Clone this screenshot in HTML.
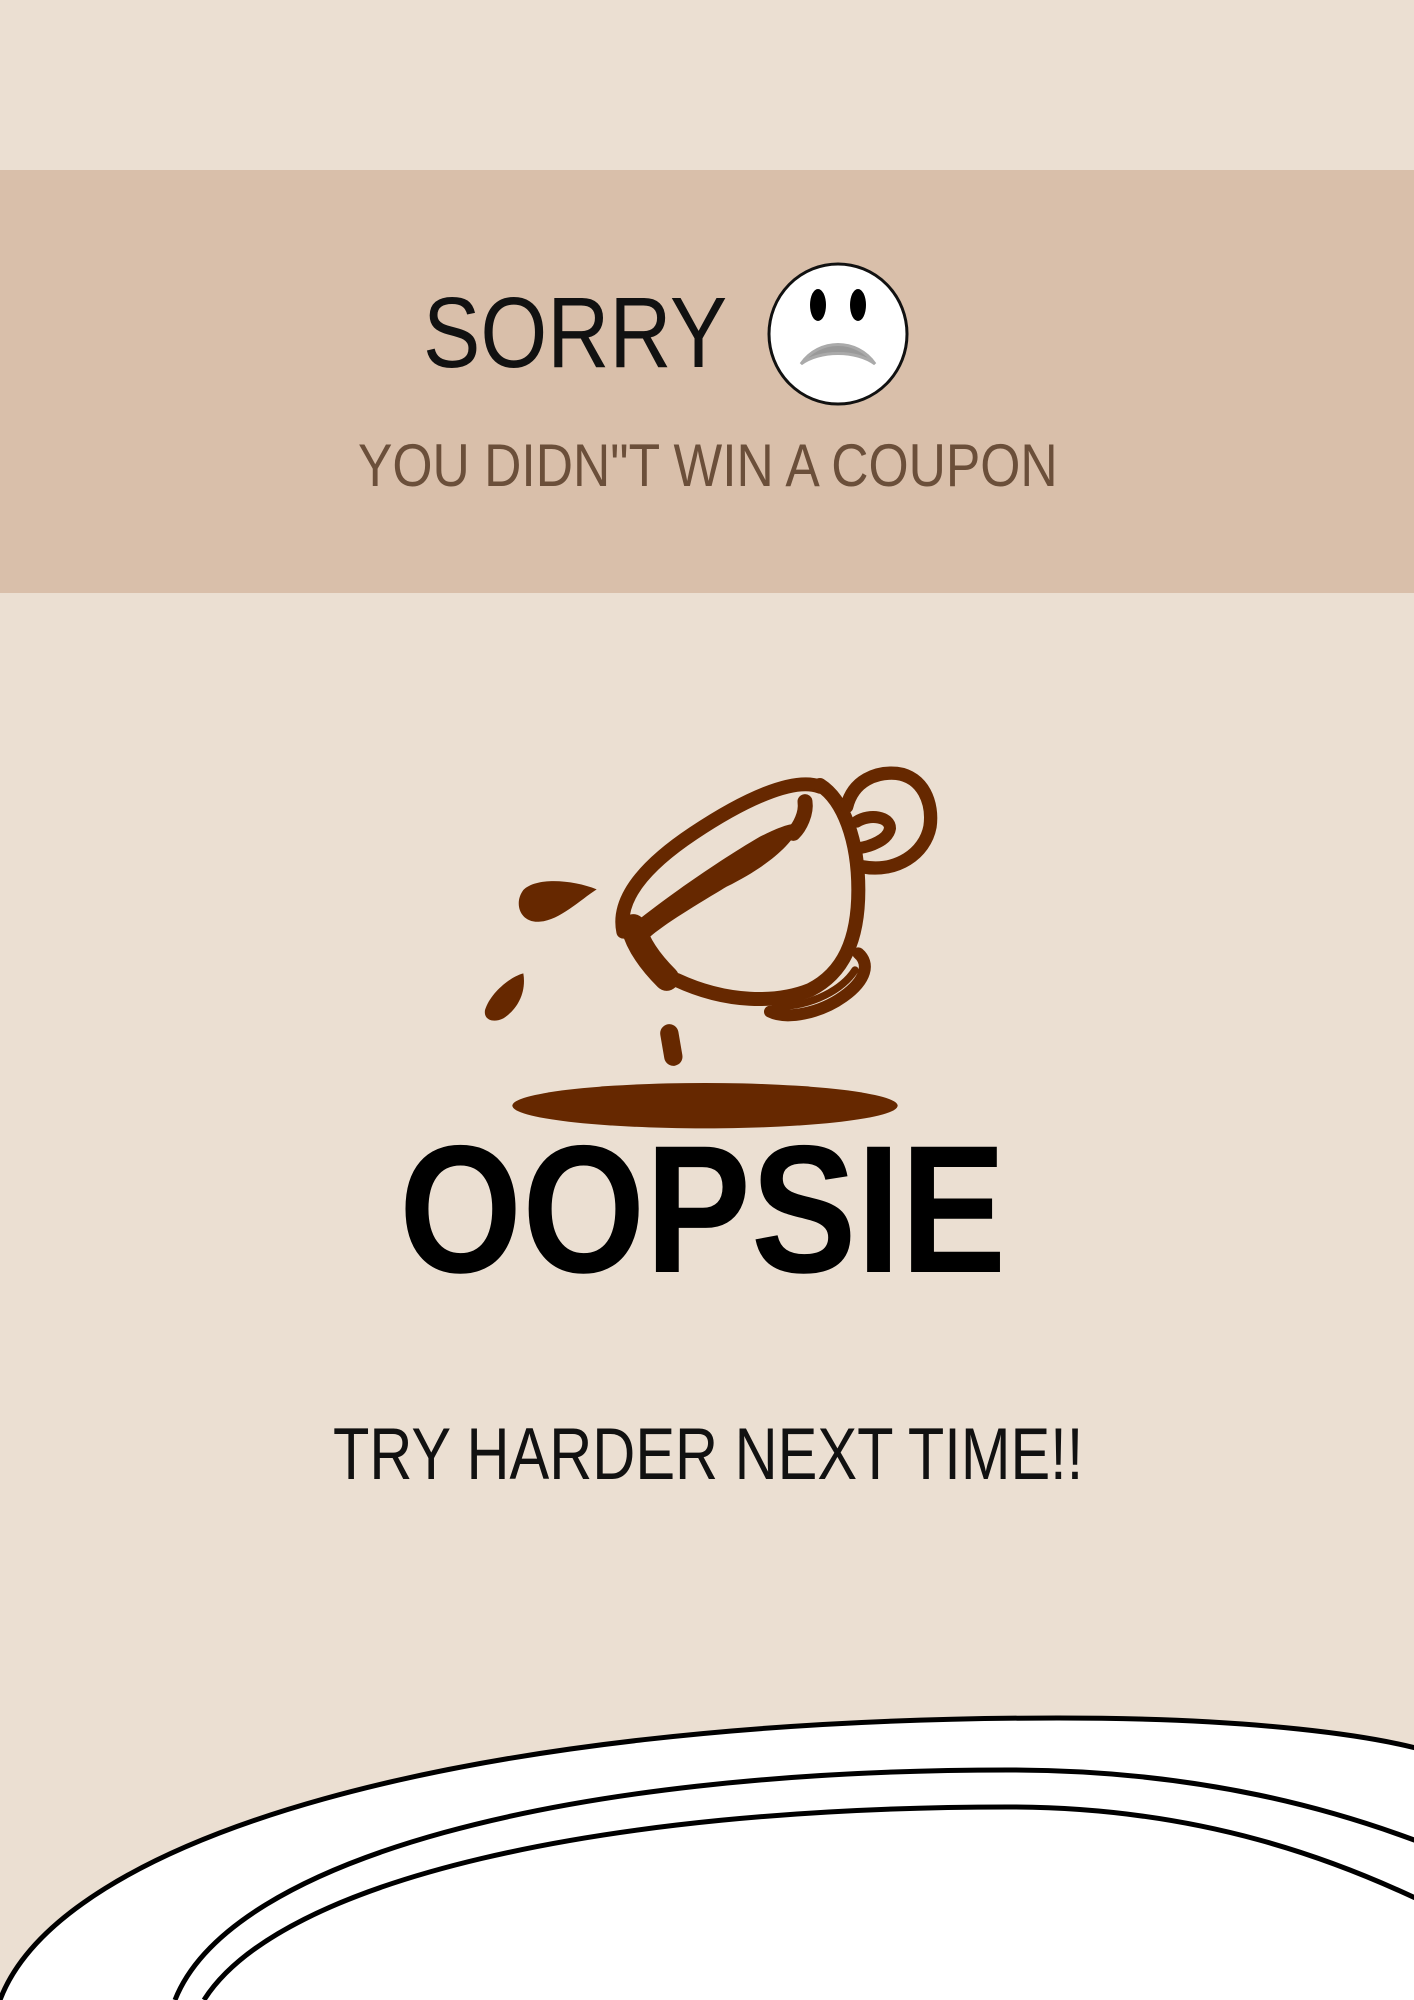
<!DOCTYPE html>
<html><head><meta charset="utf-8"><style>
html,body{margin:0;padding:0;overflow:hidden}
body{width:1414px;height:2000px;background:#EBDFD2;position:relative;overflow:hidden;font-family:"Liberation Sans",sans-serif}
.band{position:absolute;left:0;top:170px;width:1414px;height:423px;background:#D9BFAA}
.t{position:absolute;white-space:nowrap;line-height:1}
</style></head><body>
<div class="band"></div>
<div class="t" style="left:423px;top:283px;font-size:100px;color:#111;transform:scaleX(0.86);transform-origin:left top;">SORRY</div>
<svg style="position:absolute;left:764px;top:260px" width="150" height="150" viewBox="0 0 150 150">
<ellipse cx="74" cy="74" rx="69" ry="70" fill="#fff" stroke="#111" stroke-width="3"/>
<ellipse cx="54" cy="45" rx="8" ry="16" fill="#000"/>
<ellipse cx="94" cy="45" rx="8" ry="16" fill="#000"/>
<path d="M37,104 C55,78 93,78 111,104 C93,90 55,90 37,104Z" fill="#999" stroke="#aaa" stroke-width="3"/>
</svg>
<div class="t" style="left:358px;top:436px;font-size:60px;color:#6b4f3a;transform:scaleX(0.86);transform-origin:left top;">YOU DIDN"T WIN A COUPON</div>

<svg style="position:absolute;left:460px;top:740px" width="500" height="400" viewBox="0 0 1500 1200">
<g fill="#662800" stroke="none">
<ellipse cx="735" cy="1097" rx="578" ry="68"/>
<path d="M410,448 C340,420 230,410 190,450 C160,490 180,550 240,545 C300,540 360,480 410,448 Z"/>
<path d="M190,700 C150,710 90,760 75,810 C70,840 100,850 130,835 C170,810 200,760 190,700 Z"/>
<path d="M510,560 C620,470 780,360 900,290 C960,260 1010,240 1020,260 C990,320 920,380 800,440 C700,500 600,560 560,600 Z"/>
</g>
<g fill="none" stroke="#662800" stroke-linecap="round" stroke-linejoin="round">
<path d="M628,880 L640,950" stroke-width="55"/>
<path d="M520,560 C530,600 555,650 620,715" stroke-width="75"/>
<path d="M490,575 C470,480 550,380 700,280 C850,180 1000,110 1080,140" stroke-width="42"/>
<path d="M1080,135 C1150,180 1195,300 1195,450 C1195,600 1150,700 1050,750 C950,790 800,790 650,720" stroke-width="42"/>
<path d="M1035,185 C1040,220 1020,260 1000,280" stroke-width="45"/>
<path d="M1160,200 C1180,120 1250,95 1310,100 C1390,110 1420,190 1410,260 C1395,340 1310,400 1205,380" stroke-width="40"/>
<path d="M1190,245 C1230,220 1290,230 1290,265 C1285,300 1230,320 1195,325" stroke-width="36"/>
<path d="M1195,640 C1230,670 1220,720 1150,770 C1080,820 980,840 930,815" stroke-width="36"/>
<path d="M1185,690 C1150,745 1060,800 945,800" stroke-width="22"/>
</g>
</svg>

<div class="t" style="left:399px;top:1118px;font-size:182px;font-weight:bold;color:#000;transform:scaleX(0.87);transform-origin:left top;">OOPSIE</div>
<div class="t" style="left:333px;top:1418px;font-size:73px;color:#111;transform:scaleX(0.816);transform-origin:left top;">TRY HARDER NEXT TIME!!</div>

<svg style="position:absolute;left:0;top:0" width="1414" height="2000" viewBox="0 0 1414 2000">
<path d="M0,2000 C60,1840 450,1718 1058,1718 C1250,1718 1380,1735 1440,1755 L1440,2010 L0,2010 Z" fill="#fff" stroke="#000" stroke-width="5"/>
<path d="M175,2000 C230,1860 560,1770 1008,1770 C1200,1770 1340,1810 1440,1850" fill="none" stroke="#000" stroke-width="5"/>
<path d="M204,2000 C280,1880 600,1807 1008,1807 C1200,1807 1340,1860 1440,1910" fill="none" stroke="#000" stroke-width="5"/>
</svg>
</body></html>
